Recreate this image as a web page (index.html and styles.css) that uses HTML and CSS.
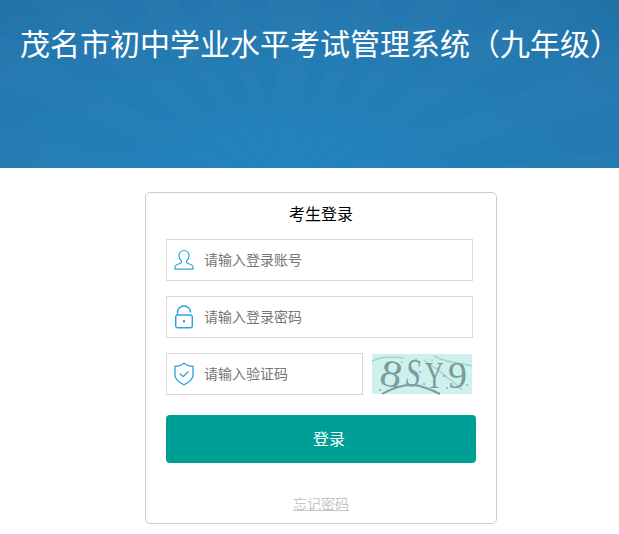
FILE: index.html
```html
<!DOCTYPE html>
<html lang="zh-CN">
<head>
  <meta charset="UTF-8" />
  <title>茂名市初中学业水平考试管理系统（九年级）</title>
  <link rel="stylesheet" href="styles.css">
</head>
<body>
  <header class="banner">
    <h1>茂名市初中学业水平考试管理系统（九年级）</h1>
  </header>
  <main class="login-box">
    <h2>考生登录</h2>
    <form class="login-form">
      <label class="field">
        <svg class="field-icon" width="20" height="22" viewBox="0 0 20 22" fill="none" stroke="#2fa3e0" stroke-width="1.2">
          <path d="M10 1.500c-3 0-5 2.300-5 5.200 0 2.200 1 4 2.300 5.100.4.4.4 1.600-.4 2.100-1.500.9-5.400 1.800-5.800 3.600-.2 1 0 2.600 0 2.600h17.800s.2-1.600 0-2.600c-.4-1.800-4.300-2.700-5.800-3.600-.8-.5-.8-1.700-.4-2.100 1.300-1.100 2.300-2.900 2.300-5.100 0-2.900-2-5.200-5-5.200z"/>
        </svg>
        <input type="text" placeholder="请输入登录账号" />
      </label>
      <label class="field">
        <svg class="field-icon" width="20" height="24" viewBox="0 0 20 24" fill="none" stroke="#2fa3e0" stroke-width="1.4">
          <path d="M3.500 10V7.500C3.500 3.800 6.300 1 10 1s6.500 2.800 6.500 6.500"/>
          <rect x="1.700" y="10" width="16.600" height="12.800" rx="2"/>
          <path d="M10 15v2.500" stroke-width="2"/>
        </svg>
        <input type="text" placeholder="请输入登录密码" />
      </label>
      <div class="captcha-row">
        <label class="field field-short">
          <svg class="field-icon" width="20" height="24" viewBox="0 0 20 24" fill="none" stroke="#2fa3e0" stroke-width="1.3">
            <path d="M10 1.200c2.500 2 5.500 3 9 3.300v8c0 4.500-4 8-9 10.300-5-2.300-9-5.800-9-10.300v-8c3.500-.3 6.500-1.300 9-3.300z"/>
            <path d="M5.800 11.500l3.200 3.200 5.500-5.200"/>
          </svg>
          <input type="text" placeholder="请输入验证码" />
        </label>
        <svg class="captcha" width="100" height="40" viewBox="0 0 100 40">
          <rect width="100" height="40" fill="#cdf2ee"/>
          <path d="M0 7C10 2 20 2 32 4M62 2c12 7 24 6 38 10M52 6c14 10 28 20 38 30" stroke="#a9d3c0" stroke-width="1.500" fill="none"/>
          <path d="M10 40c14-8 30-12 44-6 6 2 10 4 14 6" stroke="#7f9c97" stroke-width="2" fill="none"/>
          <text class="captcha-text" font-size="38" transform="translate(6 30) rotate(12) scale(1.15 1)">8</text>
          <text class="captcha-text" font-size="40" transform="translate(32 31) rotate(8) scale(.7 1)">S</text>
          <text class="captcha-text" font-size="38" transform="translate(53 34) scale(.68 1)">Y</text>
          <text class="captcha-text" font-size="38" transform="translate(76 34)">9</text>
          <g fill="#3d6a70">
            <circle cx="8" cy="36" r=".7"/><circle cx="24" cy="33" r=".7"/><circle cx="30" cy="8" r=".6"/>
            <circle cx="48" cy="18" r=".7"/><circle cx="52" cy="30" r=".7"/><circle cx="60" cy="6" r=".6"/>
            <circle cx="72" cy="22" r=".7"/><circle cx="75" cy="34" r=".7"/><circle cx="90" cy="12" r=".7"/>
            <circle cx="95" cy="31" r=".7"/><circle cx="44" cy="5" r=".6"/><circle cx="66" cy="14" r=".6"/>
          </g>
        </svg>
      </div>
      <button type="button">登录</button>
    </form>
    <a class="forgot" href="#">忘记密码</a>
  </main>
</body>
</html>
```

FILE: styles.css
```css
body {
  margin: 0;
  padding: 0;
  font-family: "Noto Sans CJK SC", "Liberation Sans", sans-serif;
  background: #fff;
  overflow: hidden;
}

.banner {
  height: 168px;
  overflow: hidden;
  background:
    repeating-conic-gradient(from 3deg at 46% 115%, rgba(255, 255, 255, 0.013) 0deg 8deg, rgba(255, 255, 255, 0) 8deg 16deg),
    radial-gradient(ellipse 520px 210px at 46% 100%, #2183bc, #2478af 75%, #2171a7);
}

.banner h1 {
  margin: 0;
  padding: 20px 0 0 20px;
  width: 640px;
  color: #fff;
  font-size: 30px;
  font-weight: 400;
  line-height: 44px;
  white-space: nowrap;
}

.login-box {
  box-sizing: border-box;
  width: 352px;
  height: 332px;
  margin: 24px 0 0 145px;
  padding: 0 20px;
  border: 1px solid #ccc;
  border-radius: 5px;
  text-align: center;
}

.login-box h2 {
  margin: 0;
  padding-top: 9px;
  height: 37px;
  font-size: 16px;
  font-weight: 400;
  line-height: 22px;
  color: #000;
}

.login-form {
  display: flex;
  flex-direction: column;
  gap: 15px;
}

.field {
  box-sizing: border-box;
  display: flex;
  align-items: center;
  width: 307px;
  height: 42px;
  padding-left: 7px;
  border: 1px solid #d9d9d9;
}

.field-short {
  width: 197px;
}

.field-icon {
  flex: none;
}

.field input {
  flex: 1;
  min-width: 0;
  margin: 0 0 2px 10px;
  padding: 0;
  border: none;
  outline: none;
  font-family: inherit;
  font-size: 14px;
}

.field input::placeholder {
  color: #757575;
  opacity: 1;
}

.captcha-row {
  display: flex;
  align-items: center;
  gap: 9px;
}

.captcha {
  overflow: visible;
}

.captcha-text {
  font-family: "Liberation Serif", serif;
  fill: #7d9c9b;
}

button {
  width: 310px;
  height: 48px;
  margin-top: 5px;
  padding: 0 0 2px 16px;
  background-color: #009f95;
  border: none;
  border-radius: 4px;
  color: #fff;
  font-family: inherit;
  font-size: 16px;
  cursor: pointer;
}

.forgot {
  display: inline-block;
  margin-top: 30px;
  color: #c9c5c5;
  font-size: 14px;
  line-height: 20px;
}
```
